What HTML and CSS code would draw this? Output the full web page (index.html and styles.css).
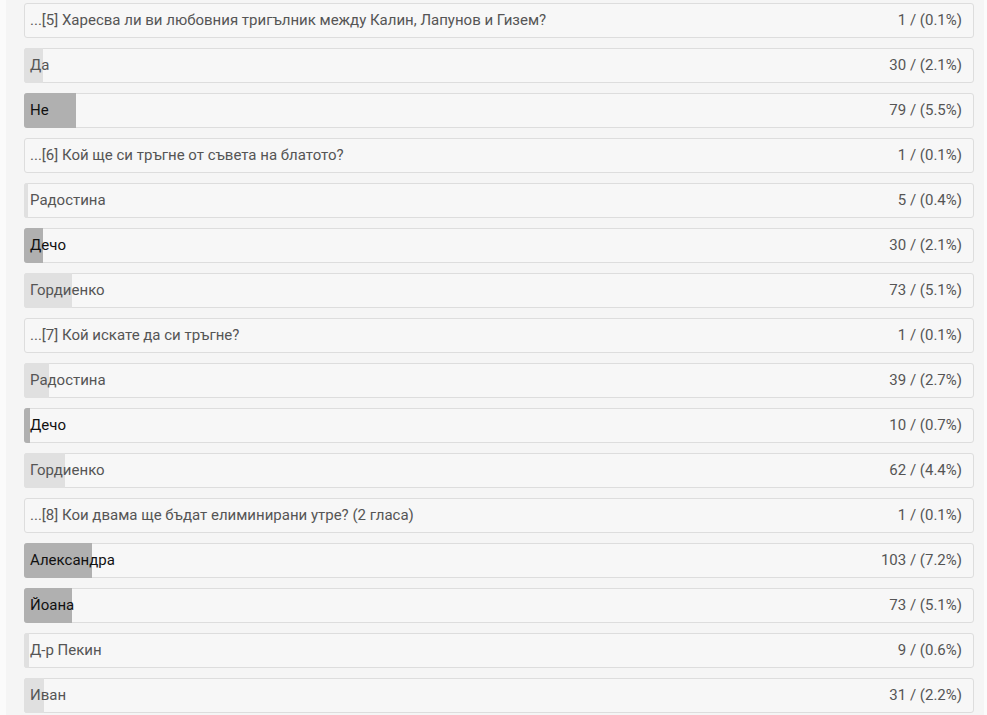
FILE: index.html
```html
<!DOCTYPE html>
<html lang="bg">
<head>
<meta charset="utf-8">
<title>Анкета</title>
<link rel="stylesheet" href="styles.css">
</head>
<body>
<div class="page">
  <div class="poll">
    <div class="row question"><span class="label">...[5] Харесва ли ви любовния тригълник между Калин, Лапунов и Гизем?</span><span class="count">1 / (0.1%)</span></div>
    <div class="row"><div class="bar light" style="width:19px"></div><span class="label">Да</span><span class="count">30 / (2.1%)</span></div>
    <div class="row"><div class="bar dark" style="width:52px"></div><span class="label strong">Не</span><span class="count">79 / (5.5%)</span></div>

    <div class="row question"><span class="label">...[6] Кой ще си тръгне от съвета на блатото?</span><span class="count">1 / (0.1%)</span></div>
    <div class="row"><div class="bar light" style="width:4px"></div><span class="label">Радостина</span><span class="count">5 / (0.4%)</span></div>
    <div class="row"><div class="bar dark" style="width:19px"></div><span class="label strong">Дечо</span><span class="count">30 / (2.1%)</span></div>
    <div class="row"><div class="bar light" style="width:48px"></div><span class="label">Гордиенко</span><span class="count">73 / (5.1%)</span></div>

    <div class="row question"><span class="label">...[7] Кой искате да си тръгне?</span><span class="count">1 / (0.1%)</span></div>
    <div class="row"><div class="bar light" style="width:25px"></div><span class="label">Радостина</span><span class="count">39 / (2.7%)</span></div>
    <div class="row"><div class="bar dark" style="width:6px"></div><span class="label strong">Дечо</span><span class="count">10 / (0.7%)</span></div>
    <div class="row"><div class="bar light" style="width:41px"></div><span class="label">Гордиенко</span><span class="count">62 / (4.4%)</span></div>

    <div class="row question"><span class="label">...[8] Кои двама ще бъдат елиминирани утре? (2 гласа)</span><span class="count">1 / (0.1%)</span></div>
    <div class="row"><div class="bar dark" style="width:68px"></div><span class="label strong">Александра</span><span class="count">103 / (7.2%)</span></div>
    <div class="row"><div class="bar dark" style="width:48px"></div><span class="label strong">Йоана</span><span class="count">73 / (5.1%)</span></div>
    <div class="row"><div class="bar light" style="width:5px"></div><span class="label">Д-р Пекин</span><span class="count">9 / (0.6%)</span></div>
    <div class="row"><div class="bar light" style="width:20px"></div><span class="label">Иван</span><span class="count">31 / (2.2%)</span></div>
  </div>
</div>
</body>
</html>
```
FILE: styles.css
```css
html, body {
  margin: 0;
  padding: 0;
  background: #fbfbfb;
}

body {
  font-family: Roboto, "Liberation Sans", sans-serif;
  font-size: 15px;
  color: #555;
}

.page {
  margin: 0 3px 0 6px;
  padding: 3px 10px 0 18px;
  background: #f5f5f5;
  min-height: 715px;
  box-sizing: border-box;
}

.poll {
  display: flex;
  flex-direction: column;
  gap: 10px;
}

.row {
  position: relative;
  display: flex;
  align-items: center;
  justify-content: space-between;
  height: 35px;
  box-sizing: border-box;
  padding: 0 11px 1px 5px;
  border: 1px solid #dddddd;
  border-radius: 3px;
  background: #f7f7f7;
}

.bar {
  position: absolute;
  left: -1px;
  top: -1px;
  bottom: -1px;
  border-radius: 3px 0 0 3px;
}

.bar.light {
  background: #e0e0e0;
}

.bar.dark {
  background: #b0b0b0;
}

.label,
.count {
  position: relative;
  white-space: nowrap;
}

.label {
  color: #555;
}

.label.strong {
  color: #111;
}

.count {
  color: #555;
}
```
